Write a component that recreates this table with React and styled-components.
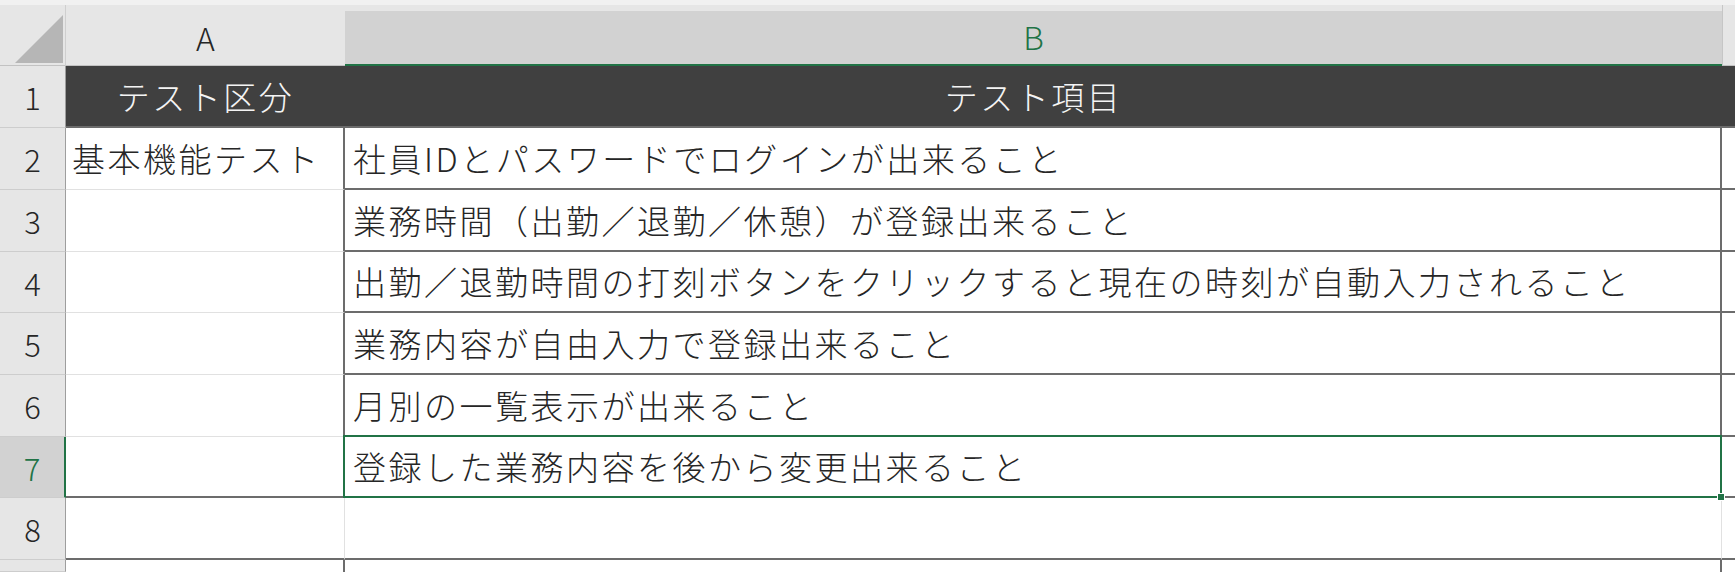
import React from 'react';
import styled, { createGlobalStyle } from 'styled-components';

const GlobalStyle = createGlobalStyle`
  html, body {
    margin: 0;
    padding: 0;
    overflow: hidden;
    background: #ffffff;
  }
  body {
    font-family: "Noto Sans CJK JP", "Noto Sans", sans-serif;
    font-weight: 300;
  }
`;

const GREEN = '#217346';

const lines = {
  none: 'none',
  grid: '1px solid #e1e1e1',
  dark: '2px solid #6c6c6c',
  green: `2px solid ${GREEN}`,
};

const rows = [
  { n: 1, h: 62, a: 'テスト区分', b: 'テスト項目', head: true },
  { n: 2, h: 62, a: '基本機能テスト', b: '社員IDとパスワードでログインが出来ること' },
  { n: 3, h: 62, b: '業務時間（出勤／退勤／休憩）が登録出来ること' },
  { n: 4, h: 61, b: '出勤／退勤時間の打刻ボタンをクリックすると現在の時刻が自動入力されること' },
  { n: 5, h: 62, b: '業務内容が自由入力で登録出来ること' },
  { n: 6, h: 62, b: '月別の一覧表示が出来ること' },
  { n: 7, h: 61, b: '登録した業務内容を後から変更出来ること', selected: true },
  { n: 8, h: 62, blank: true },
  { n: 9, h: 12, tail: true },
];

function bordersFor(row) {
  if (row.head) {
    return {
      a: { right: 'none', bottom: 'dark' },
      b: { right: 'none', bottom: 'dark' },
      c: { right: 'none', bottom: 'dark' },
    };
  }
  if (row.blank) {
    return {
      a: { right: 'grid', bottom: 'dark' },
      b: { right: 'grid', bottom: 'dark' },
      c: { right: 'none', bottom: 'dark' },
    };
  }
  if (row.tail) {
    return {
      a: { right: 'dark', bottom: 'none' },
      b: { right: 'dark', bottom: 'none' },
      c: { right: 'none', bottom: 'none' },
    };
  }
  return {
    a: { right: 'dark', bottom: row.n === 7 ? 'dark' : 'grid' },
    b: { right: 'dark', bottom: 'dark' },
    c: { right: 'none', bottom: 'dark' },
  };
}

export default function App() {
  return (
    <>
      <GlobalStyle />
      <Sheet $rows={rows.map((r) => `${r.h}px`).join(' ')}>
        <TopStrip />
        <Corner>
          <svg width="48" height="48" viewBox="0 0 48 48">
            <polygon points="48,0 48,48 0,48" fill="#b6b6b6" />
          </svg>
        </Corner>
        <ColHead>A</ColHead>
        <ColHead $selected>B</ColHead>
        <ColHead $edge />

        {rows.map((row) => {
          const br = bordersFor(row);
          return (
            <React.Fragment key={row.n}>
              <RowHead $selected={row.selected}>{row.tail ? '' : row.n}</RowHead>
              <Cell $head={row.head} $center={row.head} $pad={6} {...toProps(br.a)}>
                {row.a}
              </Cell>
              <Cell
                $head={row.head}
                $center={row.head}
                $pad={8}
                $selected={row.selected}
                {...toProps(br.b)}
              >
                {row.b}
                {row.selected && <FillHandle />}
              </Cell>
              <Cell $head={row.head} $pad={0} {...toProps(br.c)} />
            </React.Fragment>
          );
        })}
      </Sheet>
    </>
  );
}

function toProps(b) {
  return { $right: b.right, $bottom: b.bottom };
}

const Sheet = styled.div`
  width: 1735px;
  height: 572px;
  display: grid;
  grid-template-columns: 66px 279px 1377px 1fr;
  grid-template-rows: 5px 61px ${(p) => p.$rows};
  background: #ffffff;
  overflow: hidden;
`;

const TopStrip = styled.div`
  grid-column: 1 / -1;
  background: #f1f1f1;
`;

const Corner = styled.div`
  box-sizing: border-box;
  display: flex;
  align-items: flex-end;
  justify-content: flex-end;
  padding: 0 2px 2px 0;
  background: #e6e6e6;
  border-right: 1px solid #cfcfcf;
  border-bottom: 1px solid #c2c2c2;
`;

const ColHead = styled.div`
  box-sizing: border-box;
  display: flex;
  align-items: center;
  justify-content: center;
  font-size: 32px;
  line-height: 1;
  padding-top: 3px;
  color: ${(p) => (p.$selected ? GREEN : '#262626')};
  background: ${(p) =>
    p.$selected ? 'linear-gradient(#e6e6e6 0 6px, #d2d2d2 6px)' : '#e6e6e6'};
  border-bottom: ${(p) => (p.$selected ? `2px solid ${GREEN}` : '1px solid #c2c2c2')};
  border-left: ${(p) => (p.$edge ? '1px solid #c6c6c6' : 'none')};
`;

const RowHead = styled.div`
  box-sizing: border-box;
  display: flex;
  align-items: center;
  justify-content: center;
  font-size: 31px;
  line-height: 1;
  color: ${(p) => (p.$selected ? GREEN : '#262626')};
  background: ${(p) => (p.$selected ? '#d2d2d2' : '#e6e6e6')};
  border-bottom: 1px solid #cdcdcd;
  border-right: ${(p) => (p.$selected ? `2px solid ${GREEN}` : '1px solid #9e9e9e')};
`;

const Cell = styled.div`
  box-sizing: border-box;
  position: ${(p) => (p.$selected ? 'relative' : 'static')};
  display: flex;
  align-items: center;
  justify-content: ${(p) => (p.$center ? 'center' : 'flex-start')};
  padding: 0 ${(p) => p.$pad}px;
  min-width: 0;
  white-space: nowrap;
  font-size: 33px;
  letter-spacing: 2.5px;
  line-height: 1;
  color: ${(p) => (p.$head ? '#f4f4f4' : '#262626')};
  background: ${(p) => (p.$head ? '#404040' : '#ffffff')};
  border-right: ${(p) => lines[p.$right]};
  border-bottom: ${(p) => lines[p.$bottom]};

  ${(p) =>
    p.$selected &&
    `
    &::after {
      content: '';
      position: absolute;
      top: -2px;
      left: -2px;
      right: -2px;
      bottom: -2px;
      border: 2px solid ${GREEN};
      pointer-events: none;
    }
  `}
`;

const FillHandle = styled.span`
  position: absolute;
  right: -5px;
  bottom: -5px;
  width: 6px;
  height: 6px;
  background: ${GREEN};
  border: 1px solid #ffffff;
  z-index: 2;
`;
